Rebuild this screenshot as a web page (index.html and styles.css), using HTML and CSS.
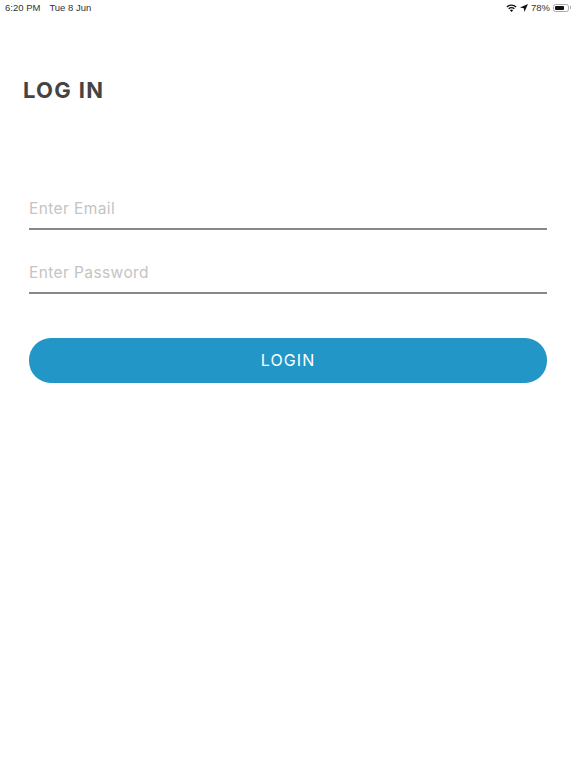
FILE: index.html
```html
<!DOCTYPE html>
<html lang="en">
<head>
    <meta charset="UTF-8">
    <meta name="viewport" content="width=device-width, initial-scale=1.0">
    <title>Log In</title>
    <link rel="stylesheet" href="styles.css">
</head>
<body>
    <div class="status-bar">
        <div class="status-left">
            <span>6:20 PM</span>
            <span>Tue 8 Jun</span>
        </div>
        <div class="status-right">
            <svg class="wifi" width="11" height="8" viewBox="0 0 12 9">
                <path d="M6 9 L4.2 7 A2.6 2.6 0 0 1 7.8 7 Z" fill="#111"/>
                <path d="M3.3 6 L2.3 4.9 A5.3 5.3 0 0 1 9.7 4.9 L8.7 6 A3.9 3.9 0 0 0 3.3 6 Z" fill="#111"/>
                <path d="M1.4 3.9 L0.3 2.8 A8.2 8.2 0 0 1 11.7 2.8 L10.6 3.9 A6.7 6.7 0 0 0 1.4 3.9 Z" fill="#111"/>
            </svg>
            <svg class="arrow" width="8" height="8" viewBox="0 0 8 8">
                <path d="M8 0 L0 3.6 L3.8 4.2 L4.4 8 Z" fill="#111"/>
            </svg>
            <span class="battery-level">78%</span>
            <div class="battery">
                <div class="battery-body"><div class="battery-fill"></div></div>
                <div class="battery-cap"></div>
            </div>
        </div>
    </div>
    <div class="container">
        <h1>LOG IN</h1>
        <form class="login-form">
            <input type="text" class="field" placeholder="Enter Email">
            <input type="password" class="field" placeholder="Enter Password">
            <button type="button" class="login-button">LOGIN</button>
        </form>
    </div>
</body>
</html>
```

FILE: styles.css
```css
body {
    font-family: Inter, "Open Sans", sans-serif;
    margin: 0;
    padding: 0;
    background-color: #fff;
    height: 768px;
    overflow: hidden;
}
.status-bar {
    display: flex;
    justify-content: space-between;
    align-items: center;
    height: 15px;
    padding: 0 5px 0 5px;
    font-family: "Liberation Sans", sans-serif;
    font-size: 9.5px;
    color: #333;
}
.status-left {
    display: flex;
    gap: 9px;
}
.status-right {
    display: flex;
    align-items: center;
    gap: 3px;
}
.battery {
    display: flex;
    align-items: center;
}
.battery-body {
    width: 16px;
    height: 8px;
    border: 1px solid #aaa;
    border-radius: 2.5px;
    padding: 1px;
    box-sizing: border-box;
}
.battery-fill {
    width: 78%;
    height: 100%;
    background-color: #111;
    border-radius: 1px;
}
.battery-cap {
    width: 1px;
    height: 3px;
    background-color: #aaa;
    margin-left: 1px;
}
.container {
    padding: 0 29px;
}
h1 {
    margin: 61px 0 0 -6px;
    font-size: 22px;
    line-height: 28px;
    font-weight: 700;
    letter-spacing: 1.3px;
    color: #444;
}
.login-form {
    display: flex;
    flex-direction: column;
    margin-top: 84px;
}
.field {
    height: 40px;
    padding: 0;
    border: none;
    border-bottom: 2px solid #888;
    font-family: inherit;
    font-size: 15.5px;
    letter-spacing: 0.4px;
    color: #444;
    outline: none;
    margin-bottom: 22px;
    box-sizing: content-box;
}
.field::placeholder {
    color: #c4c4c4;
}
.login-button {
    margin-top: 22px;
    height: 45px;
    padding: 0 0 2px;
    border: none;
    border-radius: 22px;
    background-color: #2196c7;
    color: #fff;
    font-family: inherit;
    font-size: 16px;
    letter-spacing: 1.1px;
}
```
